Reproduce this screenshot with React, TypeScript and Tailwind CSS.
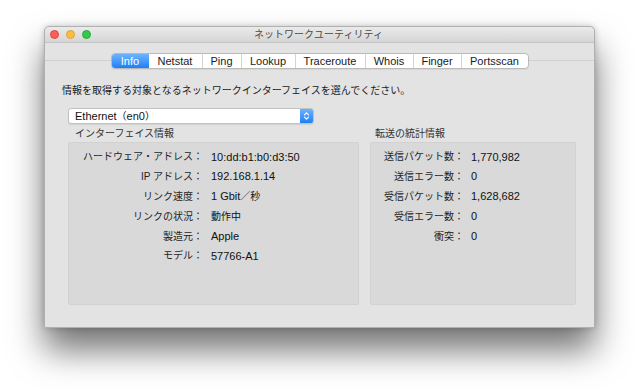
const tabs = [
  { label: "Info", w: "w-[37px]" },
  { label: "Netstat", w: "w-[53px]" },
  { label: "Ping", w: "w-[39px]" },
  { label: "Lookup", w: "w-[54px]" },
  { label: "Traceroute", w: "w-[70px]" },
  { label: "Whois", w: "w-[48px]" },
  { label: "Finger", w: "w-[48px]" },
  { label: "Portsscan", w: "w-[67px]" },
];

// label / value rows; jp = value is Japanese text
const ifaceRows = [
  { l: "ハードウェア・アドレス：", v: "10:dd:b1:b0:d3:50" },
  { l: "IP アドレス：", v: "192.168.1.14" },
  { l: "リンク速度：", v: "1 Gbit", suffix: "／秒" },
  { l: "リンクの状況：", v: "動作中", jp: true },
  { l: "製造元：", v: "Apple" },
  { l: "モデル：", v: "57766-A1" },
];

const statRows = [
  { l: "送信パケット数：", v: "1,770,982" },
  { l: "送信エラー数：", v: "0" },
  { l: "受信パケット数：", v: "1,628,682" },
  { l: "受信エラー数：", v: "0" },
  { l: "衝突：", v: "0" },
];

type Row = { l: string; v: string; suffix?: string; jp?: boolean };

function InfoRows({ rows, labelW, gap }: { rows: Row[]; labelW: string; gap: string }) {
  return (
    <div className="flex flex-col pt-[4px]">
      {rows.map((r) => (
        <div key={r.l} className={`flex h-[19.8px] items-center ${gap}`}>
          <span className={`${labelW} shrink-0 text-right text-[10px] text-[#1f1f1f]`}>{r.l}</span>
          <span className={`${r.jp ? "text-[10px]" : "text-[11px]"} text-[#111]`}>
            {r.v}
            {r.suffix && <span className="text-[10px]">{r.suffix}</span>}
          </span>
        </div>
      ))}
    </div>
  );
}

export default function App() {
  return (
    <div className="h-[392px] w-[640px] overflow-hidden bg-white pl-[44px] pt-[26px] font-['Liberation_Sans','Noto_Sans_CJK_JP',sans-serif]">
      <div className="flex h-[302px] w-[551px] flex-col rounded-t-[5px] border border-[#b0b0b0] bg-[#e3e3e3] shadow-[0_22px_34px_rgba(0,0,0,0.55),0_0_6px_rgba(0,0,0,0.2)]">
        {/* title bar */}
        <div className="grid h-[16px] grid-cols-[1fr_auto_1fr] items-center rounded-t-[5px] border-b border-[#c4c4c4] bg-gradient-to-b from-[#ebebeb] to-[#d5d5d5]">
          <div className="flex items-center gap-[7px] pl-[5px]">
            <span className="h-[9px] w-[9px] rounded-full border border-[#e0443e] bg-[#fc605b]" />
            <span className="h-[9px] w-[9px] rounded-full border border-[#dea236] bg-[#fdbc40]" />
            <span className="h-[9px] w-[9px] rounded-full border border-[#27aa35] bg-[#34c84a]" />
          </div>
          <div className="pr-[2px] text-[10px] leading-[14px] text-[#4a4a4a]">ネットワークユーティリティ</div>
          <div />
        </div>

        {/* tab control */}
        <div className="relative z-10 -mb-[9px] mt-[10px] flex justify-center">
          <div className="flex h-[16px] overflow-hidden rounded-[4px] border border-[#b9b9b9] bg-white shadow-[0_1px_1px_rgba(0,0,0,0.06)]">
            {tabs.map((t, i) => (
              <div
                key={t.label}
                className={`${t.w} flex items-center justify-center text-[11px] leading-[14px] ${
                  i === 0
                    ? "bg-gradient-to-b from-[#6cb4fb] to-[#1a7ff8] text-white"
                    : "border-l border-[#d4d4d4] text-[#1a1a1a]"
                } ${i === 1 ? "border-l-0" : ""}`}
              >
                {t.label}
              </div>
            ))}
          </div>
        </div>

        {/* tab content */}
        <div className="flex flex-1 flex-col border-t border-[#d0d0d0] bg-[#e3e3e3] pb-[22px]">
          <div className="pl-[17px] pt-[23px] text-[10px] leading-[14px] text-[#1a1a1a]">
            情報を取得する対象となるネットワークインターフェイスを選んでください。
          </div>

          <div className="flex flex-1 flex-col pl-[23px] pr-[18px]">
            <div className="mt-[10px] flex h-[16px] w-[246px] overflow-hidden rounded-[3px] border border-[#c2c2c2] bg-white shadow-[0_1px_1px_rgba(0,0,0,0.08)]">
              <div className="flex flex-1 items-center pl-[6px] text-[11px] text-[#111]">
                Ethernet<span className="text-[10px]">（</span>en0<span className="text-[10px]">）</span>
              </div>
              <div className="flex w-[13px] items-center justify-center bg-gradient-to-b from-[#6cb4fb] to-[#1a7ff8]">
                <svg width="7" height="10" viewBox="0 0 7 10" fill="none" stroke="white" strokeWidth="1.2" strokeLinecap="round" strokeLinejoin="round">
                  <path d="M1.5 3.8 L3.5 1.8 L5.5 3.8" />
                  <path d="M1.5 6.2 L3.5 8.2 L5.5 6.2" />
                </svg>
              </div>
            </div>

            <div className="mt-[2px] flex flex-1 gap-[11px]">
              <div className="flex w-[291px] flex-col">
                <div className="pl-[7px] text-[10px] leading-[16px] text-[#333]">インターフェイス情報</div>
                <div className="flex-1 rounded-[2px] border border-[#d2d2d2] bg-[#d9d9d9]">
                  <InfoRows rows={ifaceRows} labelW="w-[134px]" gap="gap-[8px]" />
                </div>
              </div>
              <div className="flex w-[206px] flex-col">
                <div className="pl-[5px] text-[10px] leading-[16px] text-[#333]">転送の統計情報</div>
                <div className="flex-1 rounded-[2px] border border-[#d2d2d2] bg-[#d9d9d9]">
                  <InfoRows rows={statRows} labelW="w-[93px]" gap="gap-[7px]" />
                </div>
              </div>
            </div>
          </div>
        </div>
      </div>
    </div>
  );
}
